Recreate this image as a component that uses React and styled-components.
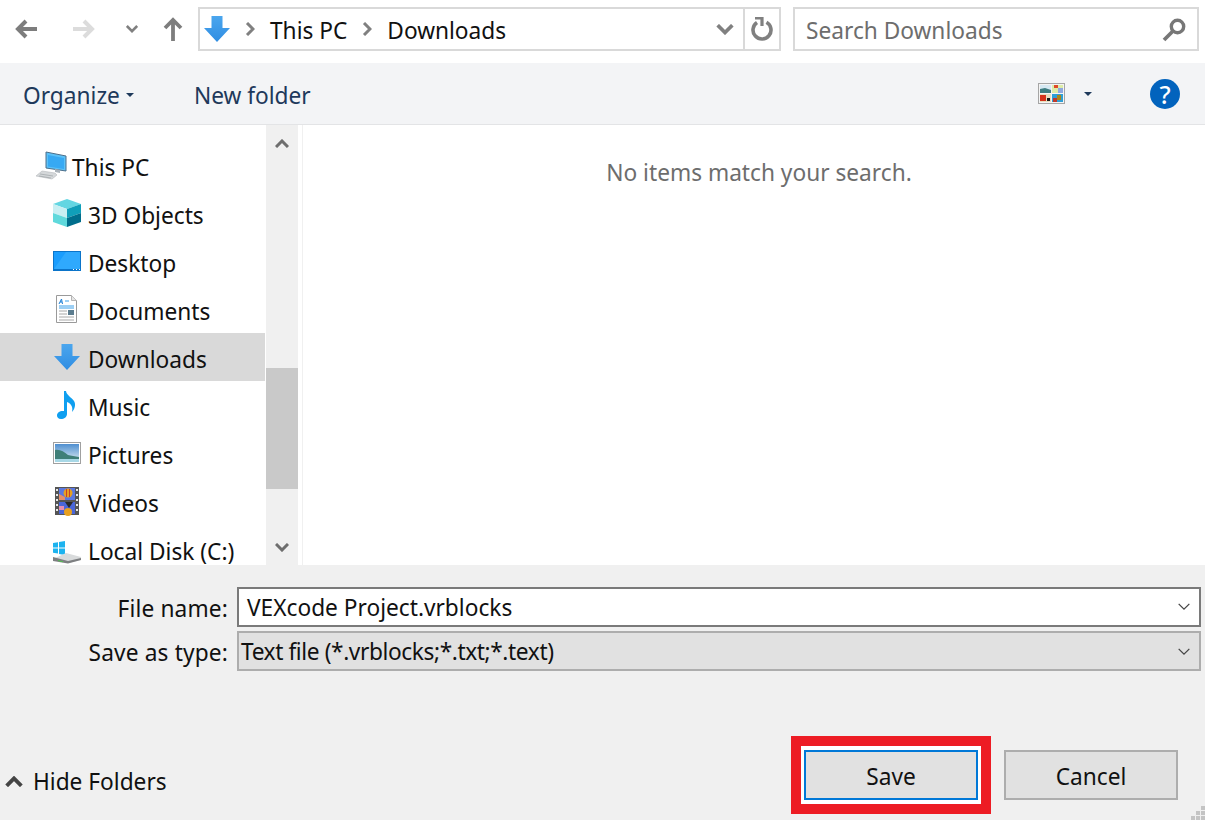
import styled, { createGlobalStyle } from "styled-components";

const GlobalStyle = createGlobalStyle`
  html, body {
    margin: 0;
    padding: 0;
    background: #f0f0f0;
    overflow: hidden;
  }
  * {
    box-sizing: border-box;
  }
`;

const Dialog = styled.div`
  display: flex;
  flex-direction: column;
  width: 1205px;
  height: 820px;
  overflow: hidden;
  font-family: "Noto Sans", "Open Sans", sans-serif;
  font-size: 22.7px;
  color: #111;
`;

const AddressRow = styled.div`
  display: flex;
  align-items: center;
  height: 63px;
  padding: 0 6px 5px 0;
  background: #fff;
`;

const NavButton = styled.div`
  display: flex;
  justify-content: center;
  flex: none;
  width: ${(p) => p.$w}px;
`;

const AddressBox = styled.div`
  display: flex;
  align-items: center;
  width: 583px;
  height: 44px;
  padding-left: 4px;
  border: 2px solid #d9d9d9;
`;

const FolderGlyph = styled.div`
  display: flex;
  margin-right: 15px;
`;

const Crumb = styled.span`
  margin: 2px 15px 0;
  color: #111;
`;

const AddressEnd = styled.div`
  display: flex;
  align-items: center;
  height: 100%;
  margin-left: auto;
`;

const RefreshCell = styled.div`
  display: flex;
  justify-content: center;
  align-items: center;
  width: 36px;
  height: 100%;
  margin-left: 9px;
  border-left: 2px solid #d9d9d9;
`;

const SearchBox = styled.div`
  display: flex;
  align-items: center;
  justify-content: space-between;
  width: 406px;
  height: 44px;
  margin-left: 12px;
  padding: 2px 11px 0;
  border: 2px solid #d9d9d9;
  color: #6d6d6d;
`;

const Toolbar = styled.div`
  display: flex;
  align-items: center;
  height: 62px;
  padding: 0 25px 0 23px;
  background: #f3f4f6;
  border-bottom: 1px solid #e3e4e6;
  color: #1e395b;
`;

const ToolItem = styled.span`
  display: flex;
  align-items: center;
  gap: 6px;
  padding-top: 3px;
  margin-right: ${(p) => p.$mr || 0}px;
`;

const Caret = styled.i`
  display: block;
  width: 0;
  height: 0;
  border-left: 4px solid transparent;
  border-right: 4px solid transparent;
  border-top: 4px solid #1e395b;
`;

const ToolRight = styled.div`
  display: flex;
  align-items: center;
  margin-left: auto;
  gap: 19px;
`;

const HelpBadge = styled.div`
  display: flex;
  align-items: center;
  justify-content: center;
  width: 30px;
  height: 30px;
  margin-left: 39px;
  border-radius: 50%;
  background: #0263bd;
  color: #fff;
  font-size: 25px;
  font-weight: 500;
`;

const Main = styled.div`
  display: flex;
  height: 440px;
  background: #fff;
`;

const Tree = styled.div`
  flex: none;
  width: 266px;
  padding: 16px 1px 0 0;
  overflow: hidden;
`;

const TreeRow = styled.div`
  display: flex;
  align-items: center;
  gap: 5px;
  height: 48px;
  padding: 4px 0 0 ${(p) => (p.$root ? 35 : 51)}px;
  background: ${(p) => (p.$selected ? "#d9d9d9" : "transparent")};
  color: #111;
`;

const Scrollbar = styled.div`
  display: flex;
  flex-direction: column;
  align-items: center;
  flex: none;
  width: 32px;
  background: #f0f0f0;
`;

const ScrollArrow = styled.div`
  flex: none;
  height: ${(p) => p.$h}px;
  padding-top: ${(p) => p.$pt}px;
  line-height: 0;
`;

const ScrollThumb = styled.div`
  flex: none;
  width: 100%;
  height: 121px;
  background: #c9c9c9;
`;

const Content = styled.div`
  flex: 1;
  margin-left: 4px;
  border-left: 1px solid #f0f0f0;
  padding: 32px 0 0 10px;
  text-align: center;
  color: #6d6d6d;
`;

const Footer = styled.div`
  display: flex;
  flex-direction: column;
  flex: 1;
  position: relative;
  padding: 22px 4px 0 0;
  background: #f0f0f0;
`;

const FieldRow = styled.div`
  display: grid;
  grid-template-columns: 228px 964px;
  column-gap: 9px;
  align-items: center;
  height: 40px;
  margin-bottom: 4px;
`;

const FieldLabel = styled.label`
  padding-top: ${(p) => (p.$low ? 3 : 2)}px;
  text-align: right;
  letter-spacing: 0.15px;
  color: #111;
`;

const FieldValue = styled.div`
  display: flex;
  align-items: center;
  justify-content: space-between;
  height: 40px;
  padding: ${(p) => (p.$filled ? "1px 8px 0 2px" : "0 8px")};
  border: 2px solid ${(p) => (p.$filled ? "#adadad" : "#7a7a7a")};
  background: ${(p) => (p.$filled ? "#e1e1e1" : "#fff")};
  letter-spacing: ${(p) => (p.$filled ? "-0.4px" : "0")};
`;

const ActionRow = styled.div`
  display: flex;
  align-items: center;
  margin-top: auto;
  padding: 0 23px 6px 5px;
`;

const HideFolders = styled.div`
  display: flex;
  align-items: center;
  gap: 10px;
  margin: 12px auto 0 0;
  color: #111;
`;

const RedFrame = styled.div`
  padding: 4px 3px;
  background: #fff;
  border: 10px solid #ed1c24;
`;

const DialogButton = styled.div`
  display: flex;
  align-items: center;
  justify-content: center;
  width: 174px;
  height: 50px;
  padding-top: 2px;
  margin-left: ${(p) => p.$ml || 0}px;
  border: 2px solid ${(p) => (p.$primary ? "#0078d7" : "#adadad")};
  background: #e1e1e1;
  color: #111;
`;

const Grip = styled.svg`
  position: absolute;
  right: 0;
  bottom: 0;
`;

const Arrow = ({ dir, color }) => (
  <svg width="24" height="24" viewBox="0 0 24 24">
    <path
      d={dir === "left" ? "M23 12H4M12 4l-8 8 8 8" : "M1 12h19M12 4l8 8-8 8"}
      fill="none"
      stroke={color}
      strokeWidth="4"
    />
  </svg>
);

const UpArrow = () => (
  <svg width="20" height="24" viewBox="0 0 20 24">
    <path d="M10 24V4M2 11l8-8 8 8" fill="none" stroke="#7d7d7d" strokeWidth="3.8" />
  </svg>
);

const Chevron = ({ w = 14, h = 9, color = "#808080", sw = 3, up }) => (
  <svg width={w} height={h} viewBox="0 0 14 9">
    <path d={up ? "M1 8l6-6 6 6" : "M1 1l6 6 6-6"} fill="none" stroke={color} strokeWidth={sw} />
  </svg>
);

const CrumbMark = () => (
  <svg width="10" height="14" viewBox="0 0 10 14">
    <path d="M2 1l6 6-6 6" fill="none" stroke="#808080" strokeWidth="3" />
  </svg>
);

const DownloadGlyph = ({ size = 26 }) => (
  <svg width={size} height={size} viewBox="0 0 26 26">
    <defs>
      <linearGradient id="dlg" x1="0" y1="0" x2="0" y2="1">
        <stop offset="0" stopColor="#4ba6ee" />
        <stop offset="1" stopColor="#2f8de2" />
      </linearGradient>
    </defs>
    <path d="M7.500 0h11v12H26L13 26 0 12h7.500z" fill="url(#dlg)" />
  </svg>
);

const TreeDownload = () => (
  <svg width="32" height="32" viewBox="0 0 32 32">
    <path d="M10.500 1h11v12H29L16 27 3 13h7.500z" fill="url(#dlg)" />
  </svg>
);

const Refresh = () => (
  <svg width="22" height="24" viewBox="0 0 22 24">
    <path d="M6 5.500a9 9 0 1 0 9.500-.3" fill="none" stroke="#808080" strokeWidth="3.6" />
    <path d="M4 1h7v8" fill="none" stroke="#808080" strokeWidth="3.2" />
  </svg>
);

const Magnifier = () => (
  <svg width="24" height="24" viewBox="0 0 24 24">
    <circle cx="15.500" cy="8.500" r="6.200" fill="none" stroke="#777" strokeWidth="3.4" />
    <path d="M11 13L2 22" stroke="#777" strokeWidth="3.8" />
  </svg>
);

const ViewsIcon = () => (
  <svg width="27" height="21" viewBox="0 0 27 21">
    <rect width="27" height="21" fill="#a5a5a5" />
    <rect x="1" y="1" width="25" height="19" fill="#f4f4f4" />
    <rect x="2" y="2" width="11" height="8" fill="#d6e8f2" />
    <path d="M2 6l5-1 6 2v3H2z" fill="#3d7c80" />
    <rect x="14" y="2" width="11" height="8" fill="#dceca8" />
    <path d="M16 2h4v3h-4z" fill="#e04a2a" />
    <path d="M20 5h5v5h-5z" fill="#8fa8e0" />
    <rect x="2" y="11" width="11" height="8" fill="#e8dfc0" />
    <path d="M2 12h6v6H2z" fill="#d4331b" />
    <path d="M9 15h3v3H9z" fill="#1a1a1a" />
    <rect x="14" y="11" width="11" height="8" fill="#2e9fd6" />
    <path d="M19 12h4v5h-4z" fill="#a8861c" />
    <path d="M15 15h4v4h-4z" fill="#c0392b" />
  </svg>
);

const PcIcon = () => (
  <svg width="32" height="32" viewBox="0 0 32 32">
    <path d="M11 1l20 4v15l-20-3z" fill="#5cc1f7" stroke="#4d6f8a" />
    <path d="M13 4l16 3v11l-16-2.500z" fill="#37a9f3" />
    <path d="M20 18l5 1v3l-5-1z" fill="#a9b2ba" />
    <path d="M7 20l13 2 2 2-5 4-16-3z" fill="#d5d8da" stroke="#b5b9bc" strokeWidth=".6" />
    <path d="M5 23l13 2M4 25l12 2" stroke="#9ea3a6" strokeWidth=".7" />
  </svg>
);

const CubeIcon = () => (
  <svg width="32" height="32" viewBox="0 0 32 32">
    <path d="M16 0l14 5-14 5-14-5z" fill="#63d6e2" />
    <path d="M2 5l14 5v9L2 14z" fill="#c8eff3" />
    <path d="M2 14l14 5v9L2 23z" fill="#5fd9dc" />
    <path d="M30 5l-14 5v9l14-5z" fill="#109fb9" />
    <path d="M30 14l-14 5v9l14-5z" fill="#006e8c" />
  </svg>
);

const DesktopIcon = () => (
  <svg width="32" height="32" viewBox="0 0 32 32">
    <rect x="2" y="4" width="28" height="20" fill="#0b74c9" />
    <rect x="3" y="5" width="26" height="17" fill="#1a9dfd" />
    <path d="M3 22L15 5h14v17z" fill="#2fa9fd" />
    <path d="M22 22.500h1M25 22.500h1M28 22.500h1" stroke="#fff" />
  </svg>
);

const DocumentIcon = () => (
  <svg width="32" height="32" viewBox="0 0 32 32">
    <path d="M5.500.5h15l5 5v22h-20z" fill="#fff" stroke="#9a9a9a" />
    <path d="M20.500.5v5h5" fill="#e6e6e6" stroke="#b5b5b5" />
    <path d="M8 9l2.500-5 1 5M9 7h2" fill="none" stroke="#1c7fd6" />
    <path d="M14 6h4M8 11h15M8 13h15" stroke="#3ba0ea" />
    <path d="M8 16h8M8 19h8M8 22h15M8 25h15" stroke="#a8a8a8" />
    <rect x="17" y="15" width="6" height="5" fill="#5c7d8f" />
  </svg>
);

const MusicIcon = () => (
  <svg width="32" height="32" viewBox="0 0 32 32">
    <path
      d="M13 0h2c.5 4 5 6 8 10 2 3 1 8-2 11 1-4 0-8-5-10v12c0 3-3 5-6 5s-4-2-4-3.500c0-3 3-5 7-4.500z"
      fill="#0f9ff0"
    />
  </svg>
);

const PictureIcon = () => (
  <svg width="32" height="32" viewBox="0 0 32 32">
    <defs>
      <linearGradient id="sky" x1="0" y1="0" x2="0" y2="1">
        <stop offset="0" stopColor="#4f8fd0" />
        <stop offset="1" stopColor="#e4f0f4" />
      </linearGradient>
    </defs>
    <rect x="2.500" y="3.500" width="27" height="21" fill="#fff" stroke="#a0a0a0" />
    <rect x="4" y="5" width="24" height="18" fill="url(#sky)" />
    <path d="M4 11c5-1 9 2 13 5 3 1 7 1 11 2v2H4z" fill="#3f7f78" />
    <path d="M4 20h24v3H4z" fill="#a8d8e6" />
  </svg>
);

const VideoIcon = () => (
  <svg width="32" height="32" viewBox="0 0 32 32">
    <rect x="4" y="0" width="24" height="28" fill="#555" />
    <path
      d="M5 2h2v2H5zM5 7h2v2H5zM5 12h2v2H5zM5 17h2v2H5zM5 22h2v2H5zM25 2h2v2h-2zM25 7h2v2h-2zM25 12h2v2h-2zM25 17h2v2h-2zM25 22h2v2h-2z"
      fill="#e8e8e8"
    />
    <rect x="8" y="1" width="16" height="12" fill="#5b78e0" />
    <rect x="8" y="15" width="16" height="12" fill="#4a66d8" />
    <path d="M8 7l6 3v3H8z" fill="#e58f6a" />
    <circle cx="17" cy="6" r="4.500" fill="#e8a020" />
    <path d="M15 2h1v8h-1zM18 2h1v8h-1z" fill="#c8402a" />
    <path d="M14 15h8l-4 6z" fill="#2a2a2a" />
    <circle cx="17" cy="25" r="4" fill="#e8a020" />
    <path d="M8 19h5v4H8z" fill="#e58fb0" />
  </svg>
);

const DiskIcon = () => (
  <svg width="32" height="32" viewBox="0 0 32 32">
    <path
      d="M2 8l5-.8v5.300H2zM8 7l6-1v6.500H8zM2 13.500h5v5l-5-.8zM8 13.500h6V20l-6-1z"
      fill="#1db3ef"
    />
    <path d="M2 24l13-6 15 4v3L17 28z" fill="#d9dbdc" />
    <path d="M2 22l15 4 13-3v2l-13 3.500L2 26z" fill="#7d7f81" />
    <path d="M7 25l5 1.300v1L7 26z" fill="#4fc04f" />
  </svg>
);

const folders = [
  { label: "This PC", icon: <PcIcon />, root: true },
  { label: "3D Objects", icon: <CubeIcon /> },
  { label: "Desktop", icon: <DesktopIcon /> },
  { label: "Documents", icon: <DocumentIcon /> },
  { label: "Downloads", icon: <TreeDownload />, selected: true },
  { label: "Music", icon: <MusicIcon /> },
  { label: "Pictures", icon: <PictureIcon /> },
  { label: "Videos", icon: <VideoIcon /> },
  { label: "Local Disk (C:)", icon: <DiskIcon /> },
];

export default function App() {
  return (
    <Dialog>
      <GlobalStyle />
      <AddressRow>
        <NavButton $w={52}><Arrow dir="left" color="#7d7d7d" /></NavButton>
        <NavButton $w={64}><Arrow dir="right" color="#dcdcdc" /></NavButton>
        <NavButton $w={32}><Chevron w={12} h={8} /></NavButton>
        <NavButton $w={50}><UpArrow /></NavButton>
        <AddressBox>
          <FolderGlyph><DownloadGlyph /></FolderGlyph>
          <CrumbMark />
          <Crumb>This PC</Crumb>
          <CrumbMark />
          <Crumb>Downloads</Crumb>
          <AddressEnd>
            <Chevron w={18} h={11} />
            <RefreshCell><Refresh /></RefreshCell>
          </AddressEnd>
        </AddressBox>
        <SearchBox>
          Search Downloads
          <Magnifier />
        </SearchBox>
      </AddressRow>

      <Toolbar>
        <ToolItem $mr={60}>Organize <Caret /></ToolItem>
        <ToolItem>New folder</ToolItem>
        <ToolRight>
          <ViewsIcon />
          <Caret />
          <HelpBadge>?</HelpBadge>
        </ToolRight>
      </Toolbar>

      <Main>
        <Tree>
          {folders.map((f) => (
            <TreeRow key={f.label} $root={f.root} $selected={f.selected}>
              {f.icon}
              {f.label}
            </TreeRow>
          ))}
        </Tree>
        <Scrollbar>
          <ScrollArrow $h={243} $pt={14}><Chevron w={14} h={9} color="#6e6e6e" up /></ScrollArrow>
          <ScrollThumb />
          <ScrollArrow $h={76} $pt={54}><Chevron w={14} h={9} color="#6e6e6e" /></ScrollArrow>
        </Scrollbar>
        <Content>No items match your search.</Content>
      </Main>

      <Footer>
        <FieldRow>
          <FieldLabel>File name:</FieldLabel>
          <FieldValue>
            VEXcode Project.vrblocks
            <Chevron w={14} h={8} color="#444" sw={1.4} />
          </FieldValue>
        </FieldRow>
        <FieldRow>
          <FieldLabel $low>Save as type:</FieldLabel>
          <FieldValue $filled>
            Text file (*.vrblocks;*.txt;*.text)
            <Chevron w={14} h={8} color="#444" sw={1.4} />
          </FieldValue>
        </FieldRow>
        <ActionRow>
          <HideFolders>
            <Chevron w={18} h={11} color="#444" sw={3.2} up />
            Hide Folders
          </HideFolders>
          <RedFrame>
            <DialogButton $primary>Save</DialogButton>
          </RedFrame>
          <DialogButton $ml={13}>Cancel</DialogButton>
        </ActionRow>
        <Grip width="15" height="15" viewBox="0 0 15 15">
          <path d="M11 1h4v4h-4zM6 6h4v4H6zM11 6h4v4h-4zM1 11h4v4H1zM6 11h4v4H6zM11 11h4v4h-4z" fill="#c4c4c4" />
        </Grip>
      </Footer>
    </Dialog>
  );
}
